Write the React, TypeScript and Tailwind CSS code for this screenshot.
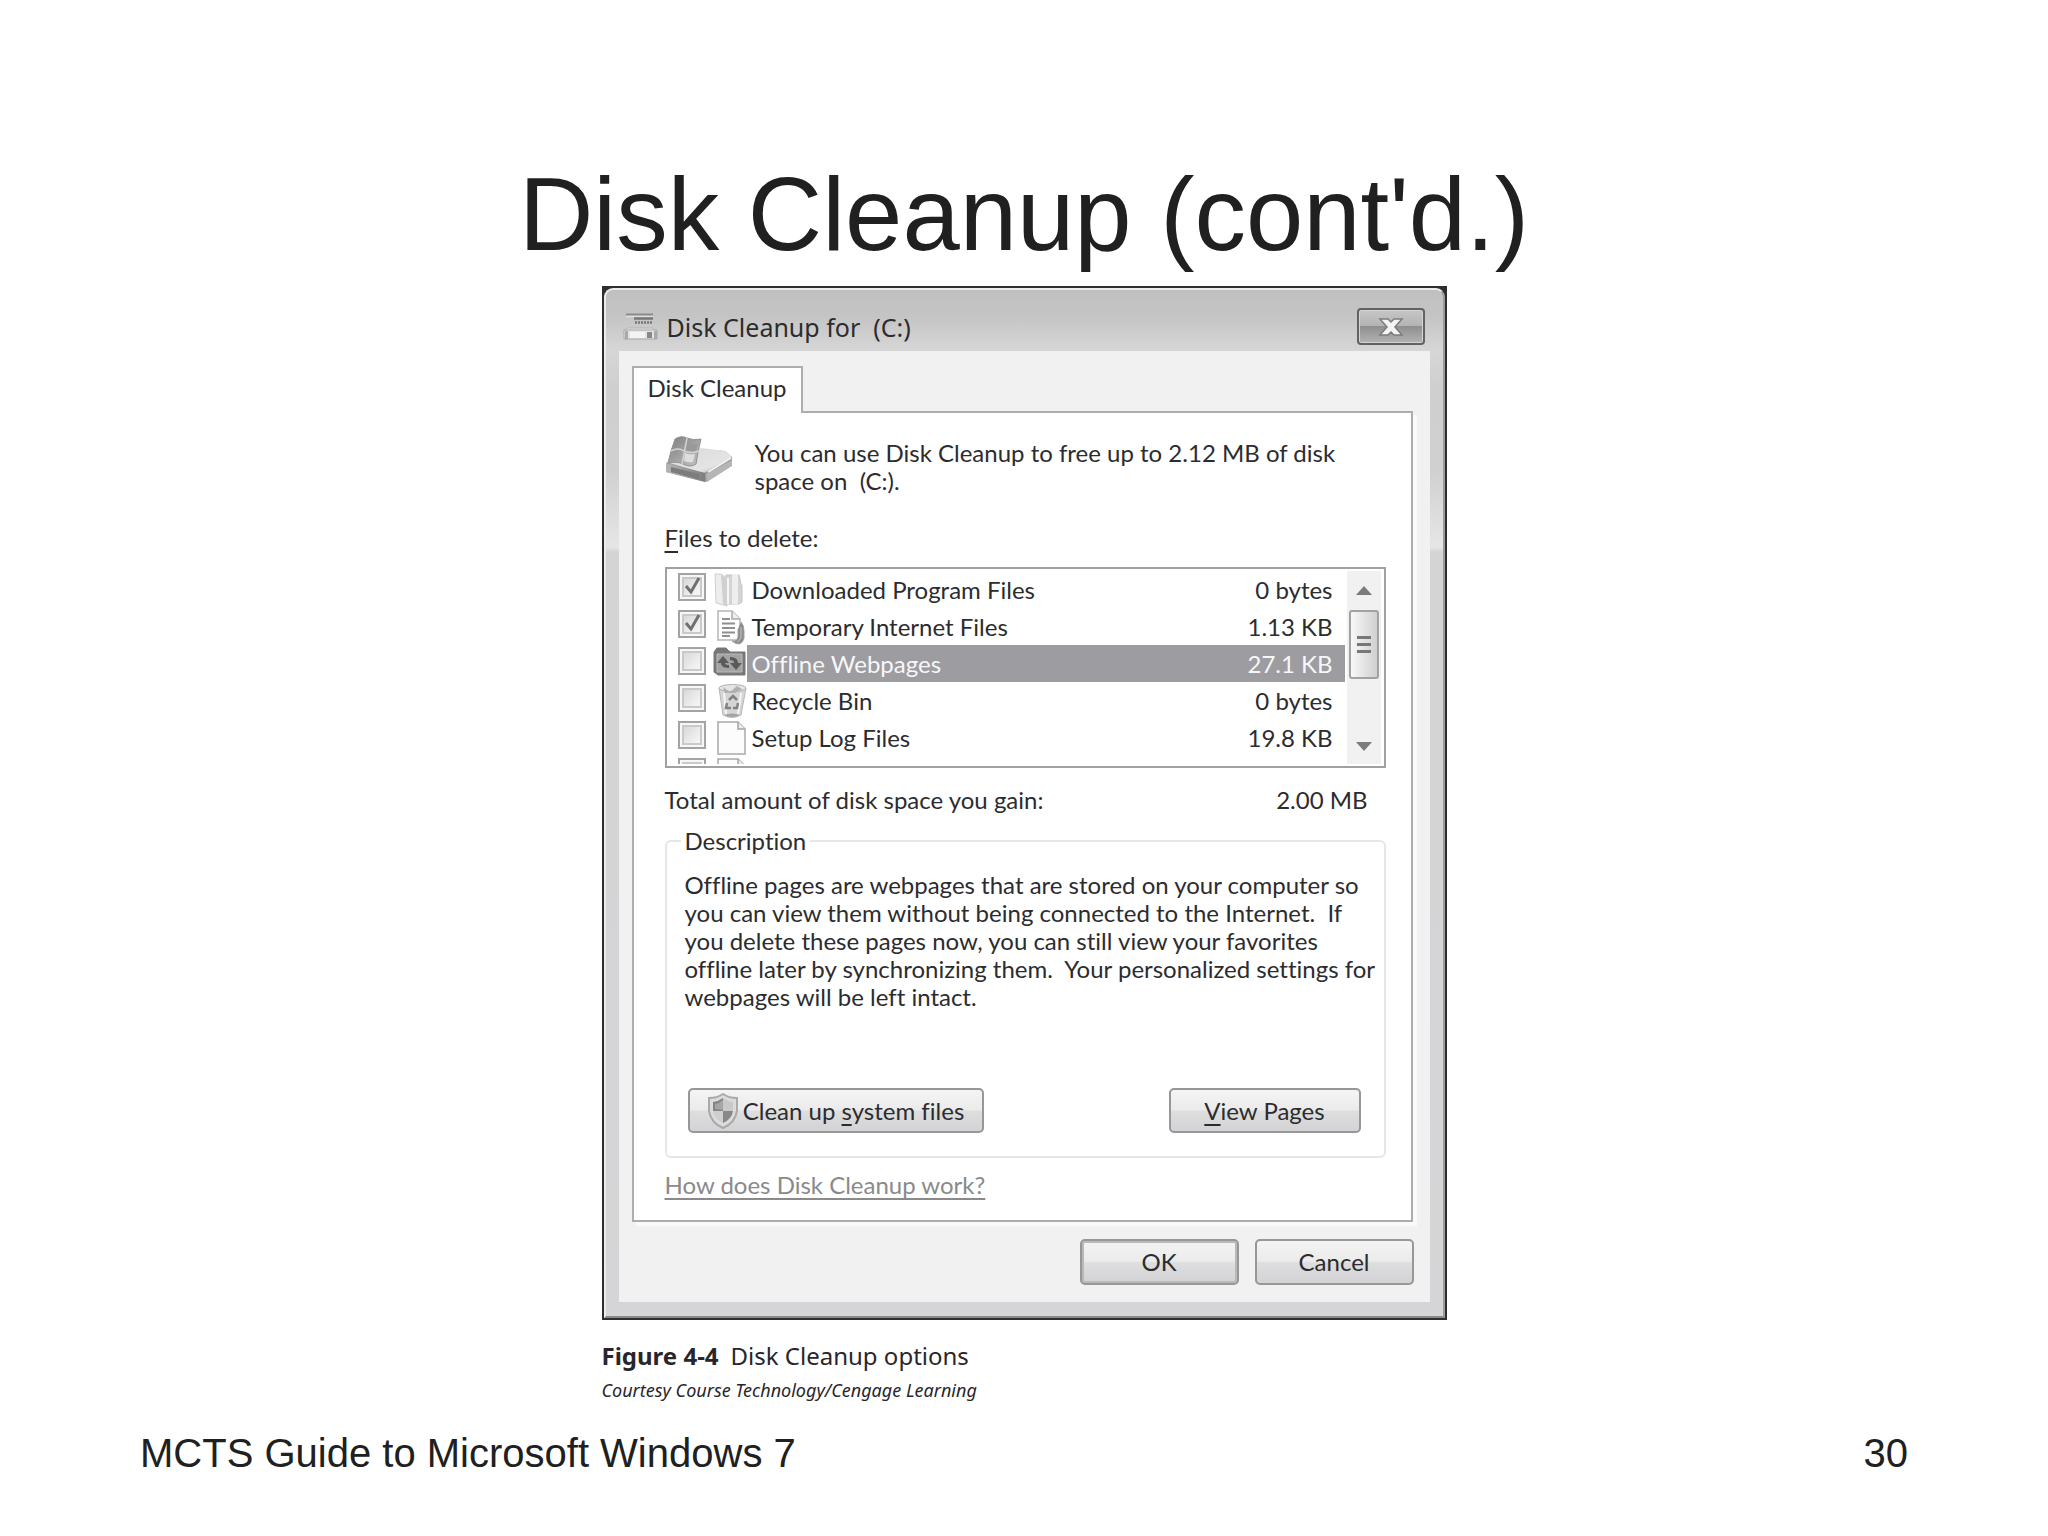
import React, { useState } from 'react';

type IconName = 'folder' | 'webdoc' | 'sync' | 'bin' | 'page';

interface CleanupItem {
  id: string;
  name: string;
  size: string;
  icon: IconName;
}

const ITEMS: CleanupItem[] = [
  { id: 'downloaded', name: 'Downloaded Program Files', size: '0 bytes', icon: 'folder' },
  { id: 'temporary', name: 'Temporary Internet Files', size: '1.13 KB', icon: 'webdoc' },
  { id: 'offline', name: 'Offline Webpages', size: '27.1 KB', icon: 'sync' },
  { id: 'recycle', name: 'Recycle Bin', size: '0 bytes', icon: 'bin' },
  { id: 'setup', name: 'Setup Log Files', size: '19.8 KB', icon: 'page' },
  { id: 'more', name: '', size: '', icon: 'page' },
];

const CleanupIcon = () => (
  <svg width="36" height="28" viewBox="0 0 36 28" aria-hidden="true">
    <path d="M3 1.5h27" stroke="#8b8b8b" strokeWidth="2" />
    <path d="M3 3.5h27" stroke="#dedede" strokeWidth="1.5" />
    <path d="M11 5.5h19" stroke="#777" strokeWidth="2.5" />
    <path d="M12 9.5h17" stroke="#777" strokeWidth="2.5" strokeDasharray="2 1" />
    <path d="M4 15h26l3 3H1z" fill="#e2e2e2" stroke="#b4b4b4" />
    <path d="M1 17h33v9H1z" fill="#e4e4e4" stroke="#a8a8a8" />
    <path d="M2 18h3v8H2zM31 18h3v8h-3z" fill="#aaa" />
    <path d="M24 19h5v6h-5z" fill="#888" />
    <path d="M7 19h15v6H7z" fill="#f3f3f3" />
  </svg>
);

const DriveIcon = () => (
  <svg width="70" height="48" viewBox="0 0 70 48" aria-hidden="true">
    <defs>
      <linearGradient id="driveTop" x1="0" y1="0" x2="1" y2="1">
        <stop offset="0" stopColor="#d9d9d9" />
        <stop offset=".7" stopColor="#e4e4e4" />
        <stop offset="1" stopColor="#a2a2a2" />
      </linearGradient>
      <linearGradient id="driveFront" x1="0" y1="0" x2="1" y2="0">
        <stop offset="0" stopColor="#b5b5b5" />
        <stop offset="1" stopColor="#7d7d7d" />
      </linearGradient>
      <linearGradient id="flagFill" x1="0" y1="0" x2="1" y2="1">
        <stop offset="0" stopColor="#7d7d7d" />
        <stop offset="1" stopColor="#c4c4c4" />
      </linearGradient>
    </defs>
    <path d="M1 27 36 13l24 2 7 6v7L41 46 1 36z" fill="#9a9a9a" />
    <path d="M1 26 36 12l25 3 6 6-28 16z" fill="url(#driveTop)" />
    <path d="m41 38 26-14v6L42 46z" fill="#b5b5b5" />
    <path d="M43 36 66 22" stroke="#f3f3f3" strokeWidth="2" />
    <path d="M1 27 40 37v9L1 36z" fill="url(#driveFront)" />
    <path d="m6 31 28 7v5L6 36z" fill="#7c7c7c" />
    <path d="M10 3q6-4 12-1 7 3 14 1l-3 13-2 12q-6 4-13 0-6-3-15-1l3-12z" fill="url(#flagFill)" stroke="#929292" />
    <path d="m22 2-5 26M6 15q7-4 13 0 7 3 15 0" fill="none" stroke="#d2d2d2" strokeWidth="1.5" />
    <path d="M23 6q5 3 10 2l-2 7q-5 1-10-1z" fill="#999" />
    <path d="M20 17q5 2 10 1l-2 8q-5 1-9-1z" fill="#dedede" />
  </svg>
);

const ShieldIcon = () => (
  <svg width="32" height="36" viewBox="0 0 32 36" aria-hidden="true">
    <path d="M16 1q6 4 14 4v13q-2 12-14 17Q4 30 2 18V5q8 0 14-4z" fill="#dcdcdc" stroke="#aaa" strokeWidth="2" />
    <path d="M16 5v13H6V9q6-1 10-4z" fill="#858585" />
    <path d="M16 5q4 3 10 4v9H16z" fill="#c9c9c9" />
    <path d="M6 18h10v12Q7 26 6 18z" fill="#cfcfcf" />
    <path d="M16 18h10q-1 8-10 12z" fill="#888" />
    <path d="M16 7v10l-8-1v-5q5-1 8-4z" fill="#a5a5a5" />
  </svg>
);

const ItemIcon: React.FC<{ name: IconName }> = ({ name }) => {
  if (name === 'folder') {
    return (
      <svg width="34" height="36" viewBox="0 0 34 36" aria-hidden="true">
        <path d="M13 3h13l2 9 1 2v16l-3 2H13z" fill="#d4d4d4" stroke="#c4c4c4" />
        <path d="M19 2h6v30h-6z" fill="#eee" />
        <path d="M2 2h6l6 4v28L3 31z" fill="#ededed" stroke="#d0d0d0" />
        <path d="m8 3 6 3v28l-4-2z" fill="#d0d0d0" />
        <path d="M15 6v26" stroke="#f6f6f6" strokeWidth="2" />
      </svg>
    );
  }
  if (name === 'webdoc') {
    return (
      <svg width="34" height="36" viewBox="0 0 34 36" aria-hidden="true">
        <path d="M5 2h14l8 8v21H5z" fill="#fdfdfd" stroke="#b5b5b5" strokeWidth="1.5" />
        <path d="M19 2v8h8" fill="#eee" stroke="#aaa" strokeWidth="1.5" />
        <path d="M9 10h8M9 14.500h13M9 19h13M9 23.500h13M9 27h8" stroke="#8f8f8f" strokeWidth="1.8" />
        <path d="M28 13q3 3 3 9v7q-1 5-5 6-4 0-7-3 5 1 6-4v-8" fill="#8b8b8b" stroke="#a2a2a2" />
        <path d="M28 18v10q-1 4-4 5" fill="none" stroke="#c9c9c9" />
      </svg>
    );
  }
  if (name === 'sync') {
    return (
      <svg width="34" height="36" viewBox="0 0 34 36" aria-hidden="true">
        <path d="M1 6 4 2h9l4 4h15v23H5l-4-3z" fill="#777" stroke="#777" />
        <path d="M4 8h25v18H4z" fill="#a3a3a3" stroke="#bdbdbd" />
        <path d="m10 10-6 7h4q0 5 8 5v-3q-4 0-4-2h4zM23 24l6-7h-4q0-6-8-6v3q4 0 4 3h-4z" fill="#5a5a5a" />
      </svg>
    );
  }
  if (name === 'bin') {
    return (
      <svg width="34" height="36" viewBox="0 0 34 36" aria-hidden="true">
        <path d="m6 5 4 27q9 5 18 0l5-27z" fill="#d5d5d5" stroke="#b9b9b9" />
        <ellipse cx="19.500" cy="5" rx="13.500" ry="3.500" fill="#e5e5e5" stroke="#b2b2b2" />
        <path d="m10 4 7 5 7-6 5 3-7 4H12z" fill="#b0b0b0" />
        <path d="m11 10 2 21M28 10l-3 21" stroke="#f5f5f5" strokeWidth="2" />
        <path d="m16 17 4-4 4 4M25 20l-1 5h-4M18 25h-5l1-5" fill="none" stroke="#828282" strokeWidth="2.5" />
        <path d="M11 32q8-3 16 0-8 4-16 0z" fill="#a3a3a3" />
      </svg>
    );
  }
  return (
    <svg width="34" height="36" viewBox="0 0 34 36" aria-hidden="true">
      <path d="M5 2h20l7 7v25H5z" fill="#fcfcfc" stroke="#a9a9a9" strokeWidth="1.5" />
      <path d="M25 2v7h7" fill="#eee" stroke="#a2a2a2" strokeWidth="1.5" />
    </svg>
  );
};

interface CheckboxProps {
  id: string;
  label: string;
  checked: boolean;
  onChange: () => void;
}

const Checkbox: React.FC<CheckboxProps> = ({ id, label, checked, onChange }) => (
  <span className="grid size-7">
    <input
      id={id}
      type="checkbox"
      aria-label={label}
      checked={checked}
      onChange={onChange}
      className="col-start-1 row-start-1 size-7 appearance-none border-2 border-[#a3a3a3] bg-linear-to-br from-[#d2d2d2] to-white shadow-[inset_0_0_0_2px_#f7f7f7,inset_0_0_0_4px_#c9c9c9]"
    />
    {checked && (
      <svg viewBox="0 0 28 28" className="pointer-events-none col-start-1 row-start-1 size-7" aria-hidden="true">
        <path d="m8 13 5 6 8-14" fill="none" stroke="#707070" strokeWidth="3" />
      </svg>
    )}
  </span>
);

interface DialogButtonProps {
  className?: string;
  children: React.ReactNode;
}

const DialogButton: React.FC<DialogButtonProps> = ({ className = '', children }) => (
  <button
    type="button"
    className={`flex items-center justify-center rounded-[5px] border-2 border-[#979797] bg-[linear-gradient(#f4f4f5_0%,#ebebec_48%,#dededf_52%,#d3d3d5_100%)] ${className}`}
  >
    {children}
  </button>
);

const Scrollbar = () => (
  <div className="flex w-[34px] flex-col items-center justify-between bg-[#f1f1f2]">
    <div className="flex w-full flex-col items-center">
      <button type="button" aria-label="Scroll up" className="flex h-[39px] w-full items-center justify-center">
        <svg width="16" height="9" viewBox="0 0 16 9" aria-hidden="true">
          <path d="m8 0 8 9H0z" fill="#7b7b7b" />
        </svg>
      </button>
      <div className="flex h-[69px] w-[30px] flex-col items-center justify-center gap-1 rounded-[3px] border-2 border-[#a2a2a2] bg-linear-to-r from-[#f8f8f8] to-[#d0d0d0]">
        <span className="h-[3px] w-[14px] bg-[#777]" />
        <span className="h-[3px] w-[14px] bg-[#777]" />
        <span className="h-[3px] w-[14px] bg-[#777]" />
      </div>
    </div>
    <button type="button" aria-label="Scroll down" className="flex h-9 w-full items-center justify-center">
      <svg width="16" height="9" viewBox="0 0 16 9" aria-hidden="true">
        <path d="M0 0h16L8 9z" fill="#7b7b7b" />
      </svg>
    </button>
  </div>
);

const FileList = () => {
  const [checked, setChecked] = useState<string[]>(['downloaded', 'temporary']);
  const selected = 'offline';

  const toggle = (id: string) => {
    setChecked((prev) => (prev.includes(id) ? prev.filter((c) => c !== id) : [...prev, id]));
  };

  return (
    <div className="mt-[15px] flex h-[201px] border-2 border-[#a0a1a3] py-[2px] pr-[3px]">
      <div className="mr-[2px] flex-1 overflow-hidden">
        <table aria-labelledby="files-label" className="w-full border-collapse">
          <tbody>
            {ITEMS.map((item) => (
              <tr key={item.id} className="h-[37px]">
                <td className="w-[80px] p-0 pl-[11px]">
                  <div className="flex h-[37px] items-start gap-[7px] pt-px">
                    <span className="pt-px">
                      <Checkbox
                        id={item.id}
                        label={item.name || 'More files'}
                        checked={checked.includes(item.id)}
                        onChange={() => toggle(item.id)}
                      />
                    </span>
                    <ItemIcon name={item.icon} />
                  </div>
                </td>
                <td className={`p-0 pl-[5px] ${item.id === selected ? 'bg-[#9d9ca1] text-[#f7f7f7]' : ''}`}>
                  <label htmlFor={item.id}>{item.name}</label>
                </td>
                <td className={`p-0 pr-3 text-right ${item.id === selected ? 'bg-[#9d9ca1] text-[#f7f7f7]' : ''}`}>
                  {item.size}
                </td>
              </tr>
            ))}
          </tbody>
        </table>
      </div>
      <Scrollbar />
    </div>
  );
};

const TabPage = () => (
  <div className="border-2 border-[#adadae] bg-white pt-[26px] pr-[25px] pb-[21px] pl-[31px] shadow-[4px_4px_0_#fafafa]">
    <div className="flex items-start gap-5">
      <div className="-mt-[3px] shrink-0">
        <DriveIcon />
      </div>
      <p className="whitespace-pre-wrap">
        You can use Disk Cleanup to free up to 2.12 MB of disk{'\n'}space on{'  '}(C:).
      </p>
    </div>

    <p id="files-label" className="mt-[29px]">
      <span className="underline underline-offset-4">F</span>iles to delete:
    </p>
    <FileList />

    <div className="mt-[18px] flex justify-between pr-[18px]">
      <span>Total amount of disk space you gain:</span>
      <span>2.00 MB</span>
    </div>

    <fieldset className="mt-[13px] min-w-0 rounded-[6px] border-2 border-[#e5e6e8] pr-[23px] pb-[23px] pl-[18px]">
      <legend className="-ml-1 px-1">Description</legend>
      <p className="mt-4 min-h-[217px] whitespace-pre">
        {'Offline pages are webpages that are stored on your computer so\nyou can view them without being connected to the Internet.  If\nyou delete these pages now, you can still view your favorites\noffline later by synchronizing them.  Your personalized settings for\nwebpages will be left intact.'}
      </p>
      <div className="flex justify-between pl-[3px]">
        <DialogButton className="h-[45px] w-[296px] gap-1">
          <ShieldIcon />
          <span>
            Clean up <span className="underline underline-offset-4">s</span>ystem files
          </span>
        </DialogButton>
        <DialogButton className="h-[45px] w-[192px]">
          <span>
            <span className="underline underline-offset-4">V</span>iew Pages
          </span>
        </DialogButton>
      </div>
    </fieldset>

    <a href="#" className="mt-[13px] inline-block text-[#8a8a8a] underline underline-offset-4">
      How does Disk Cleanup work?
    </a>
  </div>
);

const DiskCleanupDialog = () => (
  <section className="border-2 border-[#2e2e30] bg-[#2e2e30] font-['Lato',sans-serif] text-[24px] leading-7 text-[#2c2c2e] [font-variant-ligatures:none]">
    <div className="rounded-t-[9px] border-2 border-t-[#ececec] border-r-[#9b9b9b] border-b-[#8a8a8a] border-l-[#ececec] bg-[linear-gradient(#c0c0c0_0px,#c4c4c4_25px,#d6d6d6_60px,#cfcfcf_100px,#d0d0d0_180px,#e6e6e6_257px,#d4d4d5_262px,#d5d5d7_100%)] px-[13px] pb-[14px]">
      <header className="flex h-[61px] items-center justify-between pt-[12px] pr-[5px] pl-1">
        <div className="flex items-center gap-2">
          <CleanupIcon />
          <h2 className="font-['Noto_Sans',sans-serif] text-[25px] whitespace-pre">{'Disk Cleanup for  (C:)'}</h2>
        </div>
        <button
          type="button"
          aria-label="Close"
          className="flex h-[37px] w-[68px] items-center justify-center rounded-[4px] border-2 border-[#626262] bg-[linear-gradient(#c6c6c6_0%,#b4b4b4_48%,#8f8f8f_50%,#b3b3b3_100%)] shadow-[inset_0_0_0_1px_#d4d4d4]"
        >
          <svg width="26" height="20" viewBox="0 0 26 20" aria-hidden="true">
            <path d="M2 2h8l3 3 3-3h8l-7 8 7 8h-8l-3-3-3 3H2l7-8z" fill="#f4f4f4" stroke="#7c7c7c" strokeWidth="1.5" />
          </svg>
        </button>
      </header>

      <div className="bg-[#f1f1f2] pt-[15px] pr-[17px] pb-[17px] pl-[13px]">
        <div role="tablist" className="flex">
          <button
            type="button"
            role="tab"
            aria-selected="true"
            className="relative z-10 -mb-[2px] h-[47px] w-[171px] border-2 border-b-0 border-[#adadae] bg-white pb-[6px] text-center"
          >
            Disk Cleanup
          </button>
        </div>
        <TabPage />
        <div className="-mr-px mt-[17px] flex justify-end gap-4">
          <DialogButton className="h-[46px] w-[159px] shadow-[inset_0_0_0_2px_#b9b9bb]">OK</DialogButton>
          <DialogButton className="h-[46px] w-[159px]">Cancel</DialogButton>
        </div>
      </div>
    </div>
  </section>
);

export default function App() {
  return (
    <main className="flex min-h-screen flex-col bg-white px-[140px] font-['Liberation_Sans',Arial,sans-serif] text-[#202020]">
      <h1 className="mt-[155px] text-center text-[103px] leading-[120px]">Disk Cleanup (cont'd.)</h1>

      <figure className="mx-auto mt-[11px] w-full max-w-[845px]">
        <DiskCleanupDialog />
        <figcaption className="mt-[18px] font-['Noto_Sans',sans-serif] text-[#28262b]">
          <p className="flex gap-3 text-[24px] leading-9">
            <strong className="font-bold">Figure 4-4</strong>
            <span>Disk Cleanup options</span>
          </p>
          <p className="text-[18px] leading-8 italic">Courtesy Course Technology/Cengage Learning</p>
        </figcaption>
      </figure>

      <footer className="mt-[23px] flex justify-between text-[40px] leading-[48px]">
        <span>MCTS Guide to Microsoft Windows 7</span>
        <span>30</span>
      </footer>
    </main>
  );
}
